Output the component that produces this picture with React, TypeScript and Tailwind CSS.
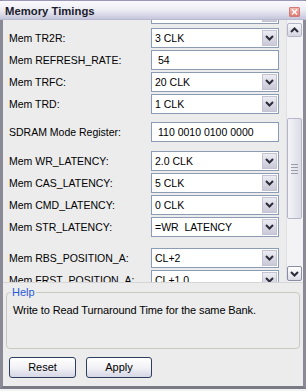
import React from "react";

const font = { fontFamily: '"Liberation Sans", Arial, sans-serif' };

function Chevron({ up = false }: { up?: boolean }) {
  return (
    <svg width="9" height="6" viewBox="0 0 9 6" className="block">
      <path
        d={up ? "M1 5 L4.5 1.5 L8 5" : "M1 1 L4.5 4.5 L8 1"}
        fill="none"
        stroke="#2b2b3a"
        strokeWidth="2"
      />
    </svg>
  );
}

function Combo({ value }: { value: string }) {
  return (
    <div className="w-[128px] h-[20px] border border-[#8c9cb4] bg-white flex items-center">
      <div className="flex-1 pl-[3px] text-[10.5px] text-black leading-none truncate">{value}</div>
      <div className="w-[15px] h-[16px] mr-[1px] border border-[#c3c3d3] bg-gradient-to-b from-[#ececf3] to-[#c9c9d8] flex items-center justify-center">
        <Chevron />
      </div>
    </div>
  );
}

function Field({ value }: { value: string }) {
  return (
    <div className="w-[128px] h-[20px] border border-[#8c9cb4] bg-white flex items-center">
      <div className="pl-[6px] text-[10.5px] text-black leading-none">{value}</div>
    </div>
  );
}

function Row({ label, children, className = "" }: { label: string; children: React.ReactNode; className?: string }) {
  return (
    <div className={"flex items-center h-[20px] shrink-0 " + className}>
      <div className="w-[148px] pl-[6px] text-[10.5px] text-black leading-none whitespace-nowrap">{label}</div>
      {children}
    </div>
  );
}

export default function App() {
  return (
    <div className="w-[306px] h-[391px] bg-[#f2f2f2] overflow-hidden" style={font}>
      <div className="w-[306px] h-[389px] border-l-[3px] border-r-[3px] border-b-[3px] border-t border-t-[#9a98b8] border-l-[#8a8a96] border-r-[#8a8a96] border-b-[#7a7a86] bg-[#ececec] flex flex-col">
        {/* Title bar */}
        <div className="h-[19px] -mx-[3px] pl-[5px] pr-[6px] pt-[3px] flex items-center justify-between bg-gradient-to-b from-[#fafafd] via-[#ececf4] to-[#c6c6dc] border-b border-[#b8b8d0]">
          <span className="text-[11.3px] font-bold text-[#1c1c2c] leading-none">Memory Timings</span>
          <div className="w-[11px] h-[10px] rounded-[1px] border border-[#d07a7a] bg-gradient-to-b from-[#f4b8b0] to-[#e07a70] flex items-center justify-center">
            <svg width="7" height="6" viewBox="0 0 7 6">
              <path d="M1 0.5 L6 5.5 M6 0.5 L1 5.5" stroke="#ffffff" strokeWidth="1.4" />
            </svg>
          </div>
        </div>

        {/* Scroll area */}
        <div className="h-[263px] flex border-b border-[#d6d6d6] shrink-0">
          <div className="flex-1 overflow-hidden flex flex-col">
            <Row label="" className="-mt-[16px]">
              <Combo value="" />
            </Row>
            <Row label="Mem TR2R:" className="mt-[4px]">
              <Combo value="3 CLK" />
            </Row>
            <Row label="Mem REFRESH_RATE:" className="mt-[2px]">
              <Field value="54" />
            </Row>
            <Row label="Mem TRFC:" className="mt-[2px]">
              <Combo value="20 CLK" />
            </Row>
            <Row label="Mem TRD:" className="mt-[2px]">
              <Combo value="1 CLK" />
            </Row>
            <Row label="SDRAM Mode Register:" className="mt-[8px]">
              <Field value="110 0010 0100 0000" />
            </Row>
            <Row label="Mem WR_LATENCY:" className="mt-[9px]">
              <Combo value="2.0 CLK" />
            </Row>
            <Row label="Mem CAS_LATENCY:" className="mt-[2px]">
              <Combo value="5 CLK" />
            </Row>
            <Row label="Mem CMD_LATENCY:" className="mt-[2px]">
              <Combo value="0 CLK" />
            </Row>
            <Row label="Mem STR_LATENCY:" className="mt-[2px]">
              <Combo value="=WR_LATENCY" />
            </Row>
            <Row label="Mem RBS_POSITION_A:" className="mt-[11px]">
              <Combo value="CL+2" />
            </Row>
            <Row label="Mem FRST_POSITION_A:" className="mt-[2px]">
              <Combo value="CL+1.0" />
            </Row>
          </div>
          {/* Scrollbar */}
          <div className="w-[17px] bg-[#f3f3f5] border-l border-[#e0e0e4] flex flex-col items-end pr-[1px] pt-[3px] pb-[1px]">
            <div className="w-[15px] h-[14px] border border-[#b4b6c8] rounded-[2px] bg-gradient-to-b from-[#f6f6fa] to-[#d6d6e2] flex items-center justify-center">
              <Chevron up />
            </div>
            <div className="mt-[81px] w-[15px] h-[101px] border border-[#b4b6c8] rounded-[2px] bg-gradient-to-r from-[#f4f4f8] to-[#dcdce6] flex flex-col items-center justify-center gap-[2px]">
              <div className="w-[7px] h-px bg-[#9a9aa8]" />
              <div className="w-[7px] h-px bg-[#9a9aa8]" />
              <div className="w-[7px] h-px bg-[#9a9aa8]" />
              <div className="w-[7px] h-px bg-[#9a9aa8]" />
            </div>
            <div className="mt-auto w-[15px] h-[15px] border border-[#8a8ea4] rounded-[2px] bg-gradient-to-b from-[#ffffff] to-[#dcdce6] flex items-center justify-center">
              <Chevron />
            </div>
          </div>
        </div>

        {/* Help group */}
        <div className="relative mx-[3px] mt-[9px] h-[57px] border border-[#c9c9c0] rounded-[4px] px-[6px] shrink-0">
          <span className="absolute -top-[6px] left-[4px] px-[1px] bg-[#ececec] text-[11px] leading-none text-[#2a5ad6]">Help</span>
          <div className="mt-[12px] text-[11px] tracking-[-0.12px] text-black leading-none whitespace-nowrap">
            Write to Read Turnaround Time for the same Bank.
          </div>
        </div>

        {/* Buttons */}
        <div className="flex gap-[10px] pl-[6px] mt-[8px]">
          <button className="w-[67px] h-[21px] rounded-[3px] border border-[#2e3e5e] bg-gradient-to-b from-[#ffffff] via-[#f2f2f6] to-[#d6d6e6] text-[11px] text-black leading-none">
            Reset
          </button>
          <button className="w-[66px] h-[21px] rounded-[3px] border border-[#2e3e5e] bg-gradient-to-b from-[#ffffff] via-[#f2f2f6] to-[#d6d6e6] text-[11px] text-black leading-none">
            Apply
          </button>
        </div>
      </div>
    </div>
  );
}
